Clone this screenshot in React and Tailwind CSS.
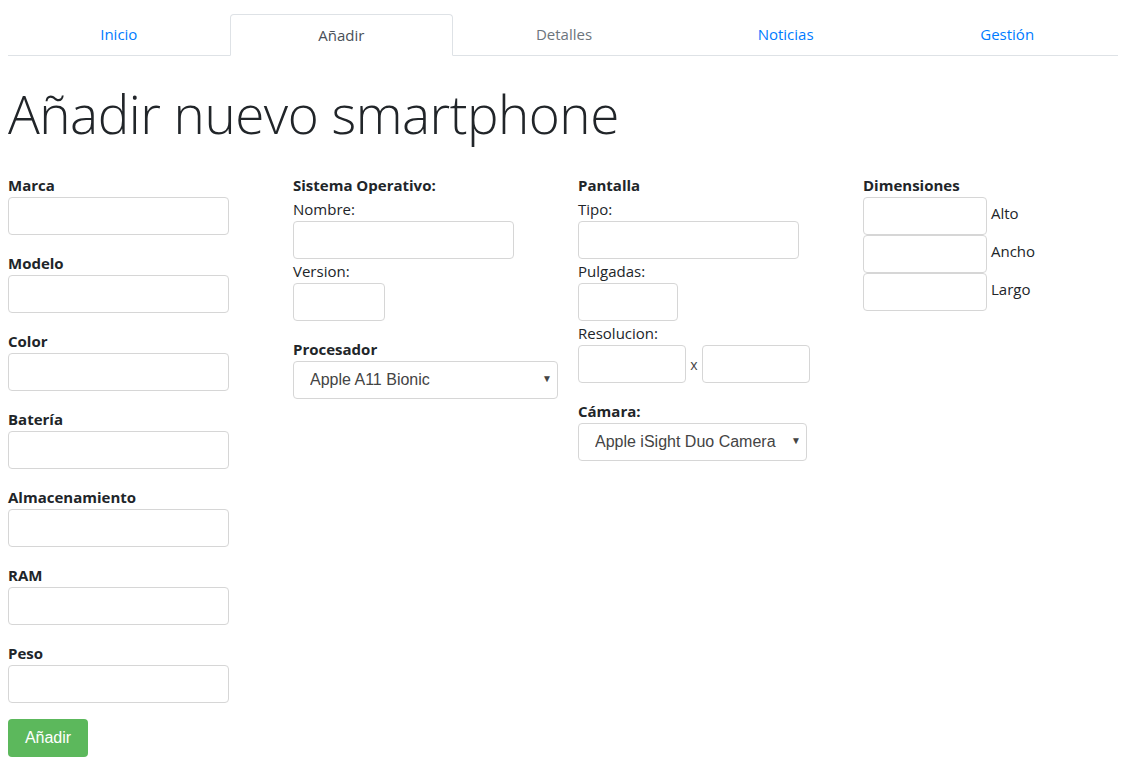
import React from "react";

const tabs = [
  { label: "Inicio", cls: "text-[#007bff]" },
  { label: "Añadir", cls: "text-[#495057]", active: true },
  { label: "Detalles", cls: "text-[#6c757d]" },
  { label: "Noticias", cls: "text-[#007bff]" },
  { label: "Gestión", cls: "text-[#007bff]" },
];

const inputCls =
  "block h-[38px] border border-[#d6d6d6] rounded-[4px] bg-white outline-none px-3";

const Field = ({ label, w = "w-[221px]" }) => (
  <div className="mb-4">
    <div className="font-bold leading-[24px]">{label}</div>
    <input type="text" className={`${inputCls} ${w}`} />
  </div>
);

const Select = ({ value, w }) => (
  <div className={`relative ${w}`}>
    <select
      className={`${inputCls} w-full appearance-none pl-4 text-[16px] text-[#444] font-['Liberation_Sans',Arial,sans-serif]`}
      defaultValue={value}
    >
      <option>{value}</option>
    </select>
    <span className="absolute right-[6px] top-[10px] text-[10px] text-[#444] pointer-events-none">
      ▼
    </span>
  </div>
);

const App = () => {
  return (
    <div className="pl-[8px] pt-[14px] bg-white min-h-[775px] text-[15px] text-[#212529] font-['Open_Sans','Noto_Sans',sans-serif]">
      <div className="w-[1110px]">
        {/* tabs */}
        <div className="flex border-b border-[#dee2e6]">
          {tabs.map((t) => (
            <div
              key={t.label}
              className={`flex-1 h-[41px] flex items-center justify-center ${t.cls} ${
                t.active
                  ? "border border-[#dee2e6] border-b-white rounded-t-[4px] -mb-px h-[42px] bg-white"
                  : ""
              }`}
            >
              {t.label}
            </div>
          ))}
        </div>

        <h1 className="text-[53px] font-light leading-[67px] mt-[24px] mb-[26px] tracking-[-0.5px]">
          Añadir nuevo smartphone
        </h1>

        <div className="flex">
          {/* columna 1 */}
          <div className="w-[285px]">
            <Field label="Marca" />
            <Field label="Modelo" />
            <Field label="Color" />
            <Field label="Batería" />
            <Field label="Almacenamiento" />
            <Field label="RAM" />
            <Field label="Peso" />
            <button className="w-[80px] h-[38px] rounded-[4px] bg-[#5cb85c] text-white text-[16px] font-['Liberation_Sans',Arial,sans-serif]">
              Añadir
            </button>
          </div>

          {/* columna 2 */}
          <div className="w-[285px]">
            <div className="font-bold leading-[24px]">Sistema Operativo:</div>
            <div className="leading-[24px]">Nombre:</div>
            <input type="text" className={`${inputCls} w-[221px]`} />
            <div className="leading-[24px]">Version:</div>
            <input type="text" className={`${inputCls} w-[92px]`} />
            <div className="font-bold leading-[24px] mt-4">Procesador</div>
            <Select value="Apple A11 Bionic" w="w-[265px]" />
          </div>

          {/* columna 3 */}
          <div className="w-[285px]">
            <div className="font-bold leading-[24px]">Pantalla</div>
            <div className="leading-[24px]">Tipo:</div>
            <input type="text" className={`${inputCls} w-[221px]`} />
            <div className="leading-[24px]">Pulgadas:</div>
            <input type="text" className={`${inputCls} w-[100px]`} />
            <div className="leading-[24px]">Resolucion:</div>
            <div className="flex items-center">
              <input type="text" className={`${inputCls} w-[108px]`} />
              <span className="w-[16px] text-center text-[14px] text-[#444]">x</span>
              <input type="text" className={`${inputCls} w-[108px]`} />
            </div>
            <div className="font-bold leading-[24px] mt-4">Cámara:</div>
            <Select value="Apple iSight Duo Camera" w="w-[229px]" />
          </div>

          {/* columna 4 */}
          <div className="w-[255px]">
            <div className="font-bold leading-[24px]">Dimensiones</div>
            {["Alto", "Ancho", "Largo"].map((d) => (
              <div key={d} className="flex items-center">
                <input type="text" className={`${inputCls} w-[124px]`} />
                <span className="ml-[4px] mb-[6px]">{d}</span>
              </div>
            ))}
          </div>
        </div>
      </div>
    </div>
  );
};

export default App;
